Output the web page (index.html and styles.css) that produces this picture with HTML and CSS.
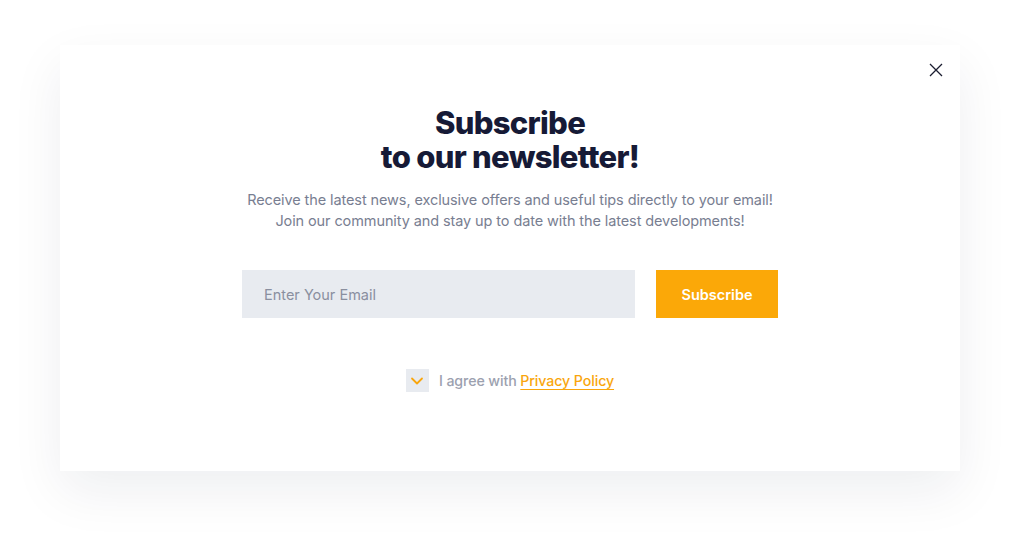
FILE: index.html
```html
<!DOCTYPE html>
<html lang="en">
<head>
<meta charset="utf-8">
<title>Subscribe</title>
<link rel="stylesheet" href="styles.css">
</head>
<body>
<div class="modal">
  <button class="close" aria-label="Close">
    <svg width="16" height="16" viewBox="0 0 16 16"><path d="M2 2L14 14M14 2L2 14" stroke="#1b1d30" stroke-width="1.3" fill="none"/></svg>
  </button>
  <h1 class="title">Subscribe<br>to our newsletter!</h1>
  <p class="lead">Receive the latest news, exclusive offers and useful tips directly to your email!<br>Join our community and stay up to date with the latest developments!</p>
  <form class="form">
    <input class="email" type="text" placeholder="Enter Your Email">
    <button class="submit" type="button">Subscribe</button>
  </form>
  <label class="agree">
    <span class="box"><svg width="14" height="10" viewBox="0 0 14 10"><path d="M2 2.5L7 7.5L12 2.5" stroke="#f9a60d" stroke-width="1.8" fill="none" stroke-linecap="round" stroke-linejoin="round"/></svg></span>
    <span class="agree-text">I agree with <a href="#" class="policy">Privacy Policy</a></span>
  </label>
</div>
</body>
</html>
```
FILE: styles.css
```css
html, body {
  margin: 0;
  padding: 0;
  background: #ffffff;
}
body {
  font-family: Inter, "Noto Sans", sans-serif;
  padding: 45px 0 80px 60px;
}
.modal {
  position: relative;
  width: 900px;
  height: 426px;
  box-sizing: border-box;
  background: #ffffff;
  box-shadow: 0 20px 50px rgba(20, 24, 50, 0.07);
  display: flex;
  flex-direction: column;
  align-items: center;
  padding-top: 61px;
}
.close {
  position: absolute;
  top: 13px;
  right: 12px;
  width: 24px;
  height: 24px;
  padding: 4px;
  border: 0;
  background: none;
  cursor: pointer;
}
.close svg { display: block; }
.title {
  margin: 0;
  font-size: 31px;
  line-height: 34px;
  font-weight: 800;
  color: #161a36;
  text-align: center;
  letter-spacing: -0.7px;
}
.lead {
  margin: 15px 0 0;
  font-size: 14.5px;
  line-height: 21px;
  color: #787e91;
  text-align: center;
  letter-spacing: -0.1px;
}
.form {
  display: flex;
  gap: 21px;
  margin-top: 39px;
}
.email {
  width: 393px;
  height: 48px;
  box-sizing: border-box;
  border: 0;
  background: #e8ebf0;
  padding: 0 22px;
  font-family: inherit;
  font-size: 14.5px;
  color: #161a36;
  outline: none;
}
.email::placeholder { color: #8a8f9f; }
.submit {
  width: 122px;
  height: 48px;
  border: 0;
  background: #fba808;
  color: #ffffff;
  font-family: inherit;
  font-size: 14.5px;
  font-weight: 600;
  cursor: pointer;
}
.agree {
  display: flex;
  align-items: center;
  gap: 10px;
  margin-top: 51px;
}
.box {
  width: 23px;
  height: 23px;
  background: #e8ebf0;
  display: flex;
  align-items: center;
  justify-content: center;
}
.box svg { display: block; }
.agree-text {
  font-size: 14.2px;
  color: #9ca1af;
  font-weight: 500;
  letter-spacing: -0.1px;
}
.policy {
  color: #f9a60d;
  text-decoration: underline;
  text-underline-offset: 3px;
}
```
